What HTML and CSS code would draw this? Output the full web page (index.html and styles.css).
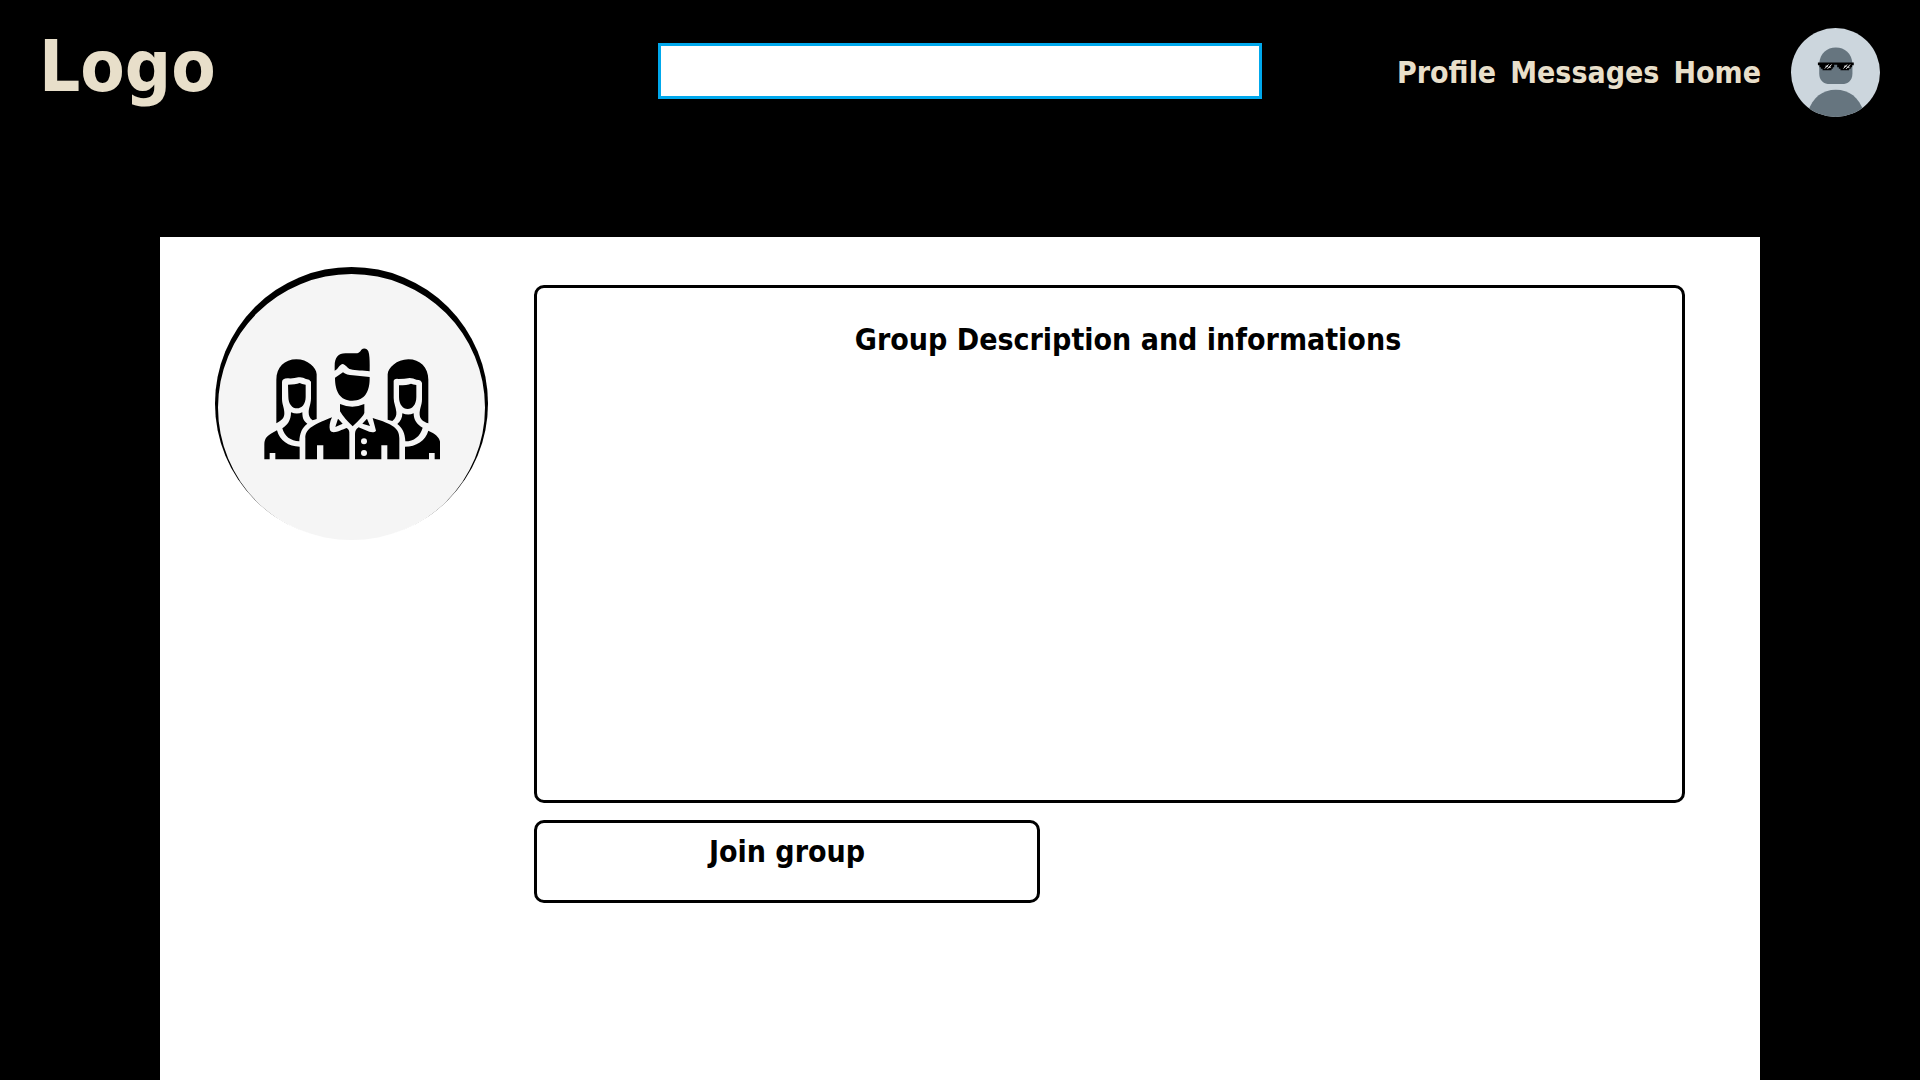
FILE: index.html
```html
<!DOCTYPE html>
<html lang="en">
<head>
<meta charset="utf-8">
<meta name="viewport" content="width=device-width, initial-scale=1">
<title>Group</title>
<link rel="stylesheet" href="styles.css">
</head>
<body>
<header class="topbar">
  <a class="logo" href="#">Logo</a>
  <input class="search" type="search" aria-label="Search">
  <div class="account">
    <nav class="nav" aria-label="Main">
      <a href="#">Profile</a>
      <a href="#">Messages</a>
      <a href="#">Home</a>
    </nav>
    <svg class="avatar" viewBox="33 23 268 268" role="img" aria-label="Your avatar">
      <defs><clipPath id="disc"><circle cx="167" cy="157" r="134"/></clipPath></defs>
      <g clip-path="url(#disc)">
        <rect x="33" y="23" width="268" height="268" fill="#ccd6dd"/>
        <path d="M118 130C120 100 141 82 168 82s48 18 50 48v30c0 22-14 32-32 32h-36c-18 0-32-10-32-32z" fill="#66757f"/>
        <path d="M84 275c14-43 44-66 84-66s70 23 84 66v20H84z" fill="#66757f"/>
      </g>
      <path d="M114 127h108v8h-5v6h-4v5h-5v4h-26v-4h-5v-5h-5v-7h-9v7h-4v5h-4v4h-27v-4h-5v-5h-4v-6h-5z" fill="#000"/>
      <path d="M135 145l11-12M143 146l12-13M191 145l11-12M199 146l12-13M137 138h7M147 141h6M193 138h7M203 141h6" fill="none" stroke="#eee" stroke-width="3"/>
    </svg>
  </div>
</header>
<main class="panel">
  <div class="group-picture">
    <svg class="group-icon" viewBox="40 26 528 336" role="img" aria-label="Group members">
      <!-- left member -->
      <path d="M77 252V121C77 84 102 60 137 60c34 0 60 24 61 45v134l-12 4c-9-5-12-14-12-24 0-14 7-25 7-43v-49q-4-7-15-8-11-7-23-5-14 4-30 3-18-1-19 11v50c0 18 8 29 7 46-1 13-9 20-24 28z"/>
      <path d="M112 136q22 0 35-5 6 4 18 5v37c0 22-12 34-26 34s-26-13-26-35z"/>
      <path d="M121 219q18 7 34 0c0 20 5 27 15 34-15 11-23 28-24 53-26-1-45-15-51-39 15-10 26-23 26-48z"/>
      <path d="M41 360v-45c0-20 11-28 38-42 8 31 35 49 68 49v38H74v-19H57v19z"/>
      <!-- right member -->
      <path d="M533 252V121C533 84 508 60 473 60c-35 0-61 26-62 45v136l14 4c10-8 13-16 12-27-1-15-8-26-8-42v-52q2-7 15-5 17 0 33-3 11 1 20 5 15 0 17 10v49c0 18-8 29-7 46 1 13 9 20 26 26z"/>
      <path d="M445 138q24 0 36-5 6 3 16 4v36c0 23-12 36-26 36s-26-13-26-36z"/>
      <path d="M455 222q18 7 34 0c0 20 10 34 27 43-7 26-27 41-52 41-1-24-9-41-24-52 10-8 15-18 15-32z"/>
      <path d="M569 360v-45c0-18-11-30-36-41-8 30-37 48-70 48v38h72v-19h17v19z"/>
      <!-- middle member -->
      <path d="M252 94V80c0-26 11-39 35-38h25c12 0 15-3 20-11 8-7 18-3 21 5 5 14 4 40 4 60-18-2-43-2-57-6-10-2-14-15-25-16-9 2-13 16-23 20z"/>
      <path d="M253 115l24-16q11 9 29 9l51 5c1 43-14 71-52 71-37 0-52-28-52-69z"/>
      <path d="M268 194q37 16 73 0v27q-2 9-35 40-25-23-38-45z"/>
      <path d="M164 360v-63c0-26 17-38 80-63-7 15-9 28-6 39 8 14 35-2 50-7q9 5 8 18v76h-78v-42h-19v42z"/>
      <path d="M446 360v-63c0-30-18-42-80-61l10 38c-9 13-34-3-52-10q-11 6-11 20v76h79v-42h18v42z"/>
      <path d="M262 238l14 15-22 10zM349 238l-14 15 23 7z"/>
      <g class="group-icon-buttons"><circle cx="340" cy="306" r="9"/><circle cx="340" cy="341" r="9"/></g>
    </svg>
  </div>
  <div class="details">
    <section class="description">
      <h1 class="heading">Group Description and informations</h1>
    </section>
    <button class="join" type="button">Join group</button>
  </div>
</main>
</body>
</html>
```
FILE: styles.css
```css
* {
  box-sizing: border-box;
}

body {
  margin: 0;
  min-height: 100vh;
  display: flex;
  flex-direction: column;
  background: #000;
  color: #000;
  font-family: "DejaVu Sans Condensed", "DejaVu Sans", sans-serif;
  font-size: 30px;
  font-weight: bold;
  line-height: 36px;
}

a {
  color: #e8dfca;
  text-decoration: none;
}

.topbar {
  display: grid;
  grid-template-columns: 1fr minmax(200px, 604px) 1fr;
  align-items: center;
  padding: 28px 40px 120px 39px;
}

.logo {
  align-self: start;
  font-size: 72px;
  line-height: 76px;
}

.search {
  width: 100%;
  height: 56px;
  margin: 0 0 3px;
  padding: 0 12px;
  border: 3px solid #00a8ec;
  border-radius: 0;
  outline: 0;
  background: #fff;
  font: inherit;
  appearance: none;
}

.account {
  display: flex;
  align-items: center;
  justify-content: flex-end;
  gap: 30px;
}

.nav {
  display: flex;
  gap: 14px;
}

.avatar {
  flex: none;
  width: 89px;
  height: 89px;
}

.panel {
  flex: 1;
  display: flex;
  align-items: flex-start;
  gap: 46px;
  margin: 0 160px;
  padding: 30px 75px 48px 55px;
  background: #fff;
}

.group-picture {
  flex: none;
  display: flex;
  align-items: center;
  justify-content: center;
  width: 273px;
  height: 273px;
  border-radius: 50%;
  background: #f5f5f5;
  box-shadow: inset 0 4px 0 3px #000;
}

.group-icon {
  width: 176px;
  height: 112px;
}

.group-icon-buttons {
  fill: #f5f5f5;
}

.details {
  flex: 1;
  display: flex;
  flex-direction: column;
  align-items: flex-start;
  gap: 17px;
  padding-top: 18px;
}

.description {
  width: 100%;
  min-height: 518px;
  padding: 34px 0 34px 37px;
  border: 3px solid #000;
  border-radius: 10px;
}

.heading {
  margin: 0;
  font-size: 30px;
  text-align: center;
}

.join {
  width: 100%;
  max-width: 506px;
  height: 83px;
  padding: 0 0 20px;
  border: 3px solid #000;
  border-radius: 10px;
  background: #fff;
  color: #000;
  font: inherit;
}
```
